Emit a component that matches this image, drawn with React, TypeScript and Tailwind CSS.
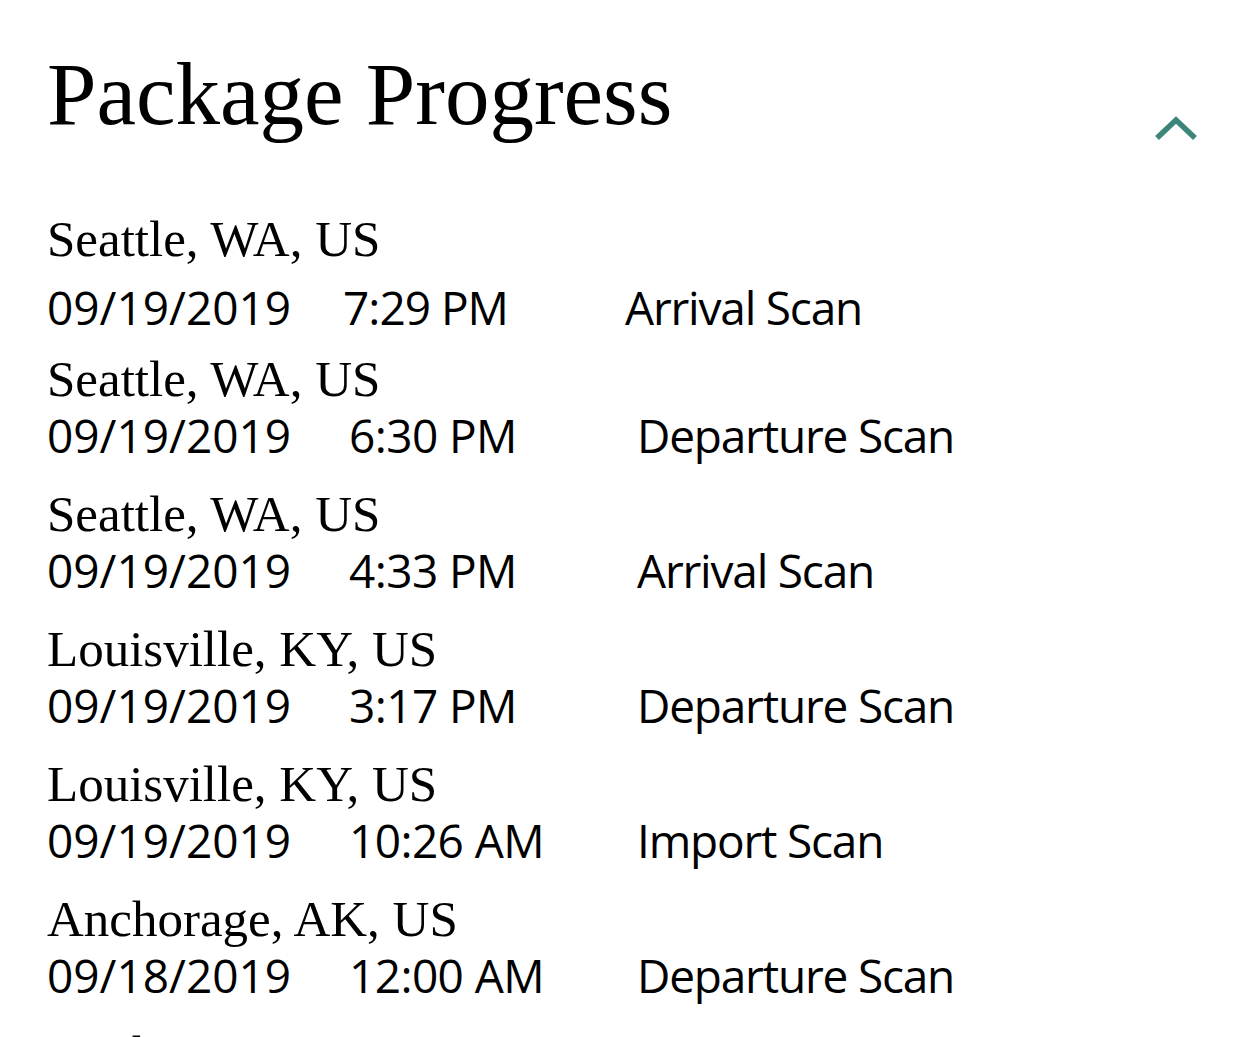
import React from "react";

type Row = { loc: string; date: string; time: string; status: string };

const rows: Row[] = [
  { loc: "Seattle, WA, US", date: "09/19/2019", time: "6:30 PM", status: "Departure Scan" },
  { loc: "Seattle, WA, US", date: "09/19/2019", time: "4:33 PM", status: "Arrival Scan" },
  { loc: "Louisville, KY, US", date: "09/19/2019", time: "3:17 PM", status: "Departure Scan" },
  { loc: "Louisville, KY, US", date: "09/19/2019", time: "10:26 AM", status: "Import Scan" },
  { loc: "Anchorage, AK, US", date: "09/18/2019", time: "12:00 AM", status: "Departure Scan" },
  { loc: "Anchorage, AK, US", date: "09/18/2019", time: "12:00 AM", status: "Origin Scan" },
];

const serif = { fontFamily: '"Liberation Serif", "Times New Roman", serif' };
const sans = { fontFamily: '"Open Sans", "Noto Sans", sans-serif' };

export default function App() {
  return (
    <div className="w-[1242px] h-[1037px] overflow-hidden bg-white text-black pl-[47px] pr-[45px] pt-[50px]">
      <div className="flex justify-between items-start">
        <h1 className="text-[89px] leading-[89px] font-normal" style={serif}>
          Package Progress
        </h1>
        <svg width="44" height="28" viewBox="0 0 44 28" className="mt-[65px] -mr-[1px]">
          <polyline points="3,23 22,5 41,23" fill="none" stroke="#3b857a" strokeWidth="5.5" />
        </svg>
      </div>

      <div className="mt-[68px]">
        <div className="text-[51px] leading-[56px]" style={serif}>Seattle, WA, US</div>
        <div className="flex text-[46px] leading-[56px] mt-[12px]" style={sans}>
          <span className="w-[296px]">09/19/2019</span>
          <span className="w-[282px] tracking-[-1px]">7:29 PM</span>
          <span className="tracking-[-1.2px]">Arrival Scan</span>
        </div>
      </div>

      <div className="mt-[16px] flex flex-col gap-[23px]">
        {rows.map((r, i) => (
          <div key={i}>
            <div className="text-[51px] leading-[56px]" style={serif}>{r.loc}</div>
            <div className="flex text-[46px] leading-[56px]" style={sans}>
              <span className="w-[302px]">{r.date}</span>
              <span className="w-[288px] tracking-[-0.6px]">{r.time}</span>
              <span className="tracking-[-1.2px]">{r.status}</span>
            </div>
          </div>
        ))}
      </div>
    </div>
  );
}
